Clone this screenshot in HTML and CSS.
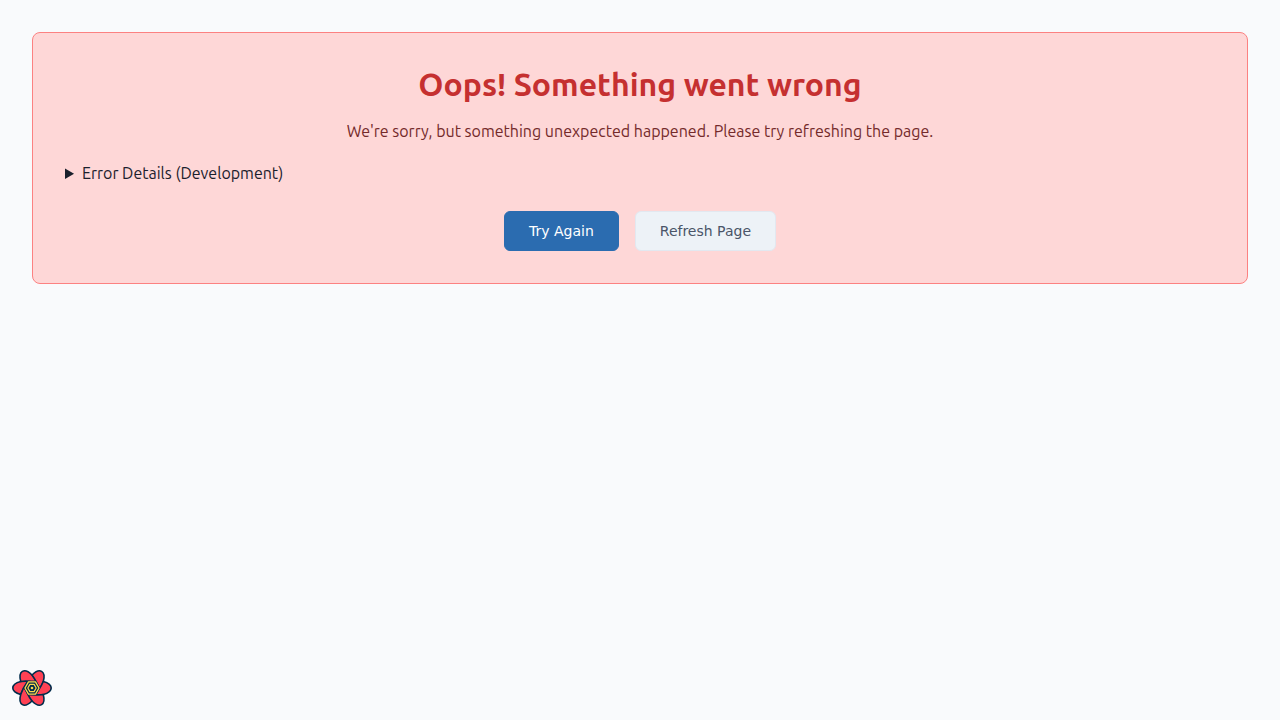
FILE: index.html
```html
<!DOCTYPE html>
<html lang="en">
<head>
<meta charset="utf-8">
<meta name="viewport" content="width=device-width, initial-scale=1">
<title>Something went wrong</title>
<link rel="stylesheet" href="styles.css">
</head>
<body>
<main class="error-card">
  <h1 class="error-title">Oops! Something went wrong</h1>
  <p class="error-message">We're sorry, but something unexpected happened. Please try refreshing the page.</p>
  <details class="error-details">
    <summary>Error Details (Development)</summary>
  </details>
  <div class="actions">
    <button type="button" class="btn btn-primary">Try Again</button>
    <button type="button" class="btn btn-secondary">Refresh Page</button>
  </div>
</main>
<button type="button" class="devtools" aria-label="Open query devtools">
  <svg class="flower" viewBox="-20 -20 40 40" aria-hidden="true">
    <defs>
      <path id="petal" d="M2-7.2C-3-7.7-8-7.3-11.3-6.5C-16-5.3-19.2-3-19.2 0C-19.2 3-16 5.2-11.3 6.5C-10.2 3.8-8.6 1-6.5-2L-4-6Z"/>
    </defs>
    <g fill="#ff4154" stroke="#002c4b" stroke-width="1.6" stroke-linejoin="round">
      <use href="#petal"/>
      <use href="#petal" transform="rotate(60)"/>
      <use href="#petal" transform="rotate(120)"/>
      <use href="#petal" transform="rotate(180)"/>
      <use href="#petal" transform="rotate(240)"/>
      <use href="#petal" transform="rotate(300)"/>
    </g>
    <path fill="#002c4b" d="M-8.3 0L-4.2-7.2H4.2L8.3 0L4.2 7.2H-4.2Z"/>
    <g fill="none" stroke="#ffd94c" stroke-linejoin="round">
      <path stroke-width="1.3" d="M-7 0L-3.5-6.1H3.5L7 0L3.5 6.1H-3.5Z"/>
      <path stroke-width="1.2" d="M-4.2 0L-2.1-3.6H2.1L4.2 0L2.1 3.6H-2.1Z"/>
    </g>
    <circle r="1.3" fill="#ffd94c"/>
  </svg>
</button>
</body>
</html>
```
FILE: styles.css
```css
* {
  box-sizing: border-box;
}

body {
  margin: 0;
  background: #f9fafc;
  color: #1a202c;
  font-family: Ubuntu, "Noto Sans", sans-serif;
  font-size: 16px;
  line-height: 24px;
}

.error-card {
  margin: 32px;
  padding: 32px;
  border: 1px solid #fc8181;
  border-radius: 8px;
  background: #fed7d7;
  text-align: center;
}

.error-title {
  margin: 0 0 16px;
  color: #c53030;
  font-size: 32px;
  font-weight: 600;
  line-height: 38px;
}

.error-message {
  margin: 0 0 18px;
  color: #742a2a;
}

.error-details {
  margin: 0 0 26px;
  text-align: left;
}

.error-details summary {
  cursor: pointer;
}

.actions {
  display: flex;
  flex-wrap: wrap;
  justify-content: center;
  gap: 16px;
}

.btn {
  padding: 11px 24px;
  border: 1px solid;
  border-radius: 6px;
  font-family: "DejaVu Sans", sans-serif;
  font-size: 14px;
  font-weight: 500;
  line-height: 16px;
  cursor: pointer;
}

.btn-primary {
  border-color: #2b6cb0;
  background: #2b6cb0;
  color: #ffffff;
}

.btn-secondary {
  border-color: #e2e8f0;
  background: #edf2f7;
  color: #4a5568;
}

.devtools {
  position: fixed;
  left: 12px;
  bottom: 12px;
  width: 40px;
  height: 40px;
  padding: 0;
  border: 0;
  background: none;
  cursor: pointer;
}

.flower {
  display: block;
  width: 100%;
  height: 100%;
}
```
